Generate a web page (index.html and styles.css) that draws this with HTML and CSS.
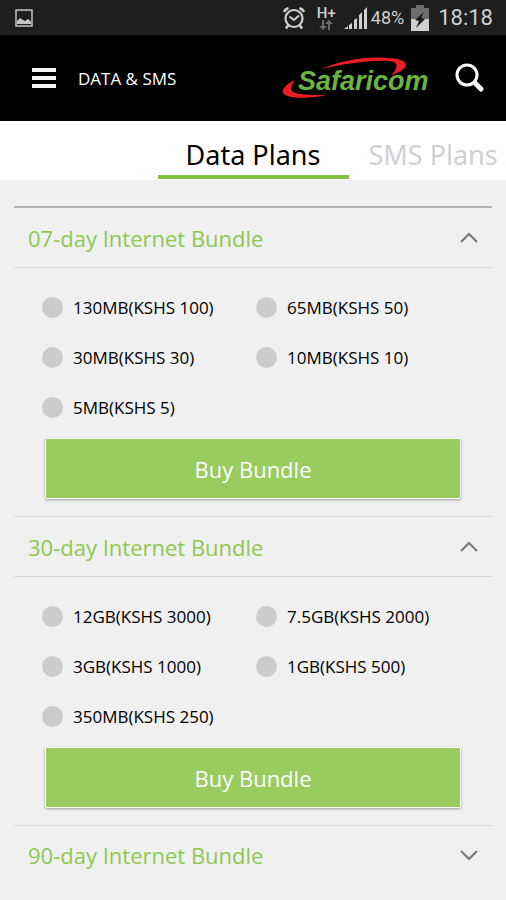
FILE: index.html
```html
<!DOCTYPE html>
<html lang="en">
<head>
<meta charset="utf-8">
<meta name="viewport" content="width=device-width, initial-scale=1">
<title>Data &amp; SMS</title>
<link rel="stylesheet" href="styles.css">
</head>
<body>
<div class="status">
  <svg class="status-picture" width="20" height="20" viewBox="0 0 20 20" aria-hidden="true">
    <rect x="2" y="2" width="16" height="16" fill="none" stroke="#c4c4c4" stroke-width="1.5"/>
    <path d="M3 16v-3l3-3 3 2 2 1 3-2 3 2.500V16z" fill="#c4c4c4"/>
  </svg>
  <svg width="24" height="24" viewBox="0 0 24 24" fill="none" stroke="#d0d0d0" aria-hidden="true">
    <circle cx="12" cy="12.500" r="8.500" stroke-width="2.200"/>
    <path d="M7.500 10.500l4.500 3.500 5-4.500" stroke-width="2"/>
    <path d="M2 6a7 7 0 0 1 4.500-4M22 6a7 7 0 0 0-4.500-4M6 19.500l-2 3M18 19.500l2 3" stroke-width="2.600"/>
  </svg>
  <span class="network">
    <span class="network-type">H+</span>
    <svg class="network-arrows" width="14" height="10" viewBox="0 0 14 10" fill="#6c6c6c" aria-hidden="true">
      <path d="M3 0h2v6h3L4 10 0 6h3zM9 10h2V4h3L10 0 6 4h3z"/>
    </svg>
  </span>
  <svg class="signal" width="24" height="24" viewBox="0 0 24 24" fill="#d0d0d0" aria-hidden="true">
    <path d="M0 23l4-3v3zM5 23v-4l3-2v6zM10 23v-9l3-2v11zM15 23V9l3-3v17zM20 23V4l3-3v22z"/>
  </svg>
  <span class="percent">48%</span>
  <svg class="battery" width="18" height="26" viewBox="0 0 18 26" aria-hidden="true">
    <path d="M5 0h8v3h5v11H0V3h5z" fill="#6c6c6c"/>
    <path d="M0 14h18v12H0z" fill="#d0d0d0"/>
    <path d="M13 7L4 15l4 1-3 7 9-9-4-1z" fill="#1c1c1c"/>
  </svg>
  <time class="clock">18:18</time>
</div>

<header class="bar">
  <button class="icon-button" type="button" aria-label="Menu">
    <svg width="24" height="22" viewBox="0 0 24 22" fill="#f5f5fa" aria-hidden="true"><path d="M0 1h24v4H0zM0 9h24v4H0zM0 17h24v4H0z"/></svg>
  </button>
  <h1 class="title">DATA &amp; SMS</h1>
  <svg class="logo" width="150" height="46" viewBox="0 0 150 46" role="img" aria-label="Safaricom">
    <path d="M41 14C60 6 86 1 106 3c13 0 21 3 20 8-2 4-9 7-15 10 5-6 8-11 3-14C103 4 72 7 41 14z" fill="#ed1c24"/>
    <path d="M15 25C6 29 1 35 3 38c4 6 28 6 43 2-14 0-31 0-34-4-2-3 0-7 3-11z" fill="#ed1c24"/>
    <text x="18" y="35" class="logo-text">Safaricom</text>
  </svg>
  <button class="icon-button" type="button" aria-label="Search">
    <svg width="30" height="30" viewBox="0 0 30 30" fill="none" stroke="#fff" aria-hidden="true">
      <circle cx="12" cy="12" r="10" stroke-width="3"/><path d="M20 20l6 6" stroke-width="5" stroke-linecap="round"/>
    </svg>
  </button>
</header>

<nav class="tabs">
  <a class="tab tab-active" href="#data" aria-current="page">Data Plans</a>
  <a class="tab" href="#sms">SMS Plans</a>
</nav>

<main class="bundles" id="data">
  <section class="bundle">
    <h2 class="bundle-title">
      <button class="toggle" type="button" aria-expanded="true">07-day Internet Bundle
        <svg width="18" height="11" viewBox="0 0 18 11" class="chevron" aria-hidden="true"><path d="M1 10l8-8 8 8"/></svg>
      </button>
    </h2>
    <form class="offer">
      <div class="options">
        <label class="option"><input type="radio" name="week">130MB(KSHS 100)</label>
        <label class="option"><input type="radio" name="week">65MB(KSHS 50)</label>
        <label class="option"><input type="radio" name="week">30MB(KSHS 30)</label>
        <label class="option"><input type="radio" name="week">10MB(KSHS 10)</label>
        <label class="option"><input type="radio" name="week">5MB(KSHS 5)</label>
      </div>
      <button class="buy" type="button">Buy Bundle</button>
    </form>
  </section>
  <section class="bundle">
    <h2 class="bundle-title">
      <button class="toggle" type="button" aria-expanded="true">30-day Internet Bundle
        <svg width="18" height="11" viewBox="0 0 18 11" class="chevron" aria-hidden="true"><path d="M1 10l8-8 8 8"/></svg>
      </button>
    </h2>
    <form class="offer">
      <div class="options">
        <label class="option"><input type="radio" name="month">12GB(KSHS 3000)</label>
        <label class="option"><input type="radio" name="month">7.5GB(KSHS 2000)</label>
        <label class="option"><input type="radio" name="month">3GB(KSHS 1000)</label>
        <label class="option"><input type="radio" name="month">1GB(KSHS 500)</label>
        <label class="option"><input type="radio" name="month">350MB(KSHS 250)</label>
      </div>
      <button class="buy" type="button">Buy Bundle</button>
    </form>
  </section>
  <section class="bundle">
    <h2 class="bundle-title">
      <button class="toggle" type="button" aria-expanded="false">90-day Internet Bundle
        <svg width="18" height="11" viewBox="0 0 18 11" class="chevron" aria-hidden="true"><path d="M1 1l8 8 8-8"/></svg>
      </button>
    </h2>
  </section>
</main>
</body>
</html>
```
FILE: styles.css
```css
* {
  box-sizing: border-box;
}

body {
  margin: 0;
  background: #f0f0f0;
  color: #000;
  font-family: "Open Sans", "Noto Sans", sans-serif;
}

button {
  border: 0;
  padding: 0;
  background: none;
  font: inherit;
  color: inherit;
  cursor: pointer;
}

svg {
  display: block;
  flex: none;
}

.status {
  display: flex;
  align-items: center;
  height: 35px;
  padding: 0 13px 0 14px;
  background: #1e1e1e;
  color: #d0d0d0;
  font-family: Roboto, sans-serif;
}

.status-picture {
  margin-right: auto;
}

.network {
  display: flex;
  flex-direction: column;
  align-items: center;
  margin: 0 8px 0 11px;
}

.network-type {
  font-size: 15px;
  line-height: 14px;
  font-weight: 500;
}

.percent {
  margin: 0 7px 0 3px;
  font-size: 18px;
}

.clock {
  margin-left: 9px;
  font-size: 22px;
}

.bar {
  display: flex;
  align-items: center;
  height: 86px;
  padding: 0 21px 0 32px;
  background: #000;
  color: #fff;
}

.title {
  margin: 0 auto 0 22px;
  font-size: 17px;
  font-weight: 400;
}

.logo {
  margin-right: 25px;
}

.logo-text {
  fill: #6cb33f;
  font: italic bold 27px "Liberation Sans", sans-serif;
}

.tabs {
  display: grid;
  grid-template-columns: 1fr 191px 1fr;
  height: 59px;
  overflow: hidden;
  background: #fff;
  font-family: "Noto Sans", sans-serif;
  font-size: 27px;
}

.tab {
  padding-left: 20px;
  color: #d0d0d0;
  line-height: 68px;
  text-decoration: none;
  white-space: nowrap;
}

.tab-active {
  grid-column: 2;
  height: 58px;
  padding: 0;
  border-bottom: 4px solid #82c341;
  color: #000;
  text-align: center;
}

.bundles {
  margin: 26px 14px 0;
  border-top: 2px solid #b4b4b4;
}

.bundle + .bundle {
  border-top: 1px solid #d8d8d8;
}

.bundle-title {
  margin: 0;
  font-size: 22px;
  font-weight: 400;
}

.toggle {
  display: flex;
  align-items: center;
  justify-content: space-between;
  width: 100%;
  height: 60px;
  padding: 0 14px;
  border-bottom: 1px solid #d8d8d8;
  color: #8dc850;
}

.toggle[aria-expanded="false"] {
  height: 58px;
  border-bottom: 0;
}

.chevron {
  fill: none;
  stroke: #777;
  stroke-width: 2;
}

.offer {
  padding: 14px 31px 17px 28px;
}

.options {
  display: grid;
  grid-template-columns: 1fr 1fr;
  grid-auto-rows: 50px;
  column-gap: 9px;
}

.option {
  display: flex;
  align-items: center;
  gap: 10px;
  font-size: 17px;
  white-space: nowrap;
}

.option input {
  appearance: none;
  width: 21px;
  height: 21px;
  margin: 0;
  border-radius: 50%;
  background: #ccc;
}

.option input:checked {
  background: #82c341;
}

.buy {
  display: block;
  width: calc(100% - 3px);
  height: 61px;
  margin: 6px 0 0 3px;
  border: 1px solid #fff;
  border-radius: 2px;
  background: #99cb5f;
  box-shadow: 0 1px 3px rgba(0, 0, 0, 0.35);
  color: #fff;
  font-size: 22px;
}
```
